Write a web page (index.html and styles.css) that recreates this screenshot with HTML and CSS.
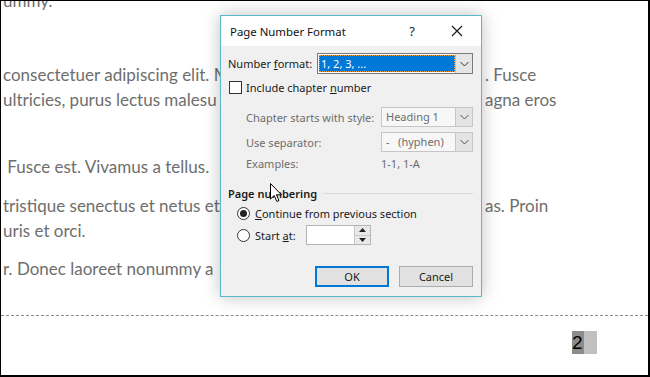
FILE: index.html
```html
<!DOCTYPE html>
<html>
<head>
<meta charset="utf-8">
<link rel="stylesheet" href="styles.css">
</head>
<body>
<div class="frame">
  <div class="doc">
    <div class="line top"><span class="left">ummy.</span></div>
    <div class="para p1">
      <div class="line"><span class="left">consectetuer adipiscing elit. M</span><span class="right">. Fusce</span></div>
      <div class="line"><span class="left">ultricies, purus lectus malesu</span><span class="right">agna eros</span></div>
      <div class="line"><span class="left"></span></div>
    </div>
    <div class="para p2">
      <div class="line"><span class="left">&nbsp;Fusce est. Vivamus a tellus.</span></div>
    </div>
    <div class="para p3">
      <div class="line"><span class="left">tristique senectus et netus et</span><span class="right">as. Proin</span></div>
      <div class="line"><span class="left">uris et orci.</span></div>
    </div>
    <div class="para p4">
      <div class="line"><span class="left">r. Donec laoreet nonummy a</span></div>
    </div>
  </div>
  <div class="footer">
    <div class="pagenum"><span class="pn-dark">2</span><span class="pn-light"></span></div>
  </div>

  <div class="dialog">
    <div class="titlebar">
      <span class="title">Page Number Format</span>
      <span class="help">?</span>
      <svg class="close" width="12" height="12" viewBox="0 0 12 12"><path d="M1 1L11 11M11 1L1 11" stroke="#1a1a1a" stroke-width="1.2" fill="none"/></svg>
    </div>
    <div class="body">
      <div class="row fmt">
        <span class="lbl">Number <u>f</u>ormat:</span>
        <div class="select main">
          <span class="sel-text"><span class="hl">1, 2, 3, ...</span></span>
          <span class="arrow"><svg width="9" height="6" viewBox="0 0 9 6"><path d="M0.5 1L4.5 5L8.5 1" stroke="#333" fill="none"/></svg></span>
        </div>
      </div>
      <div class="row check">
        <span class="box"></span>
        <span class="lbl">Include chapter <u>n</u>umber</span>
      </div>
      <div class="row sub first">
        <span class="lbl dis">Chapter starts with style:</span>
        <div class="select small">
          <span class="sel-text dis">Heading 1</span>
          <span class="arrow"><svg width="9" height="6" viewBox="0 0 9 6"><path d="M0.5 1L4.5 5L8.5 1" stroke="#555" fill="none"/></svg></span>
        </div>
      </div>
      <div class="row sub sep">
        <span class="lbl dis">Use separator:</span>
        <div class="select small">
          <span class="sel-text dis">-&nbsp;&nbsp;&nbsp;(hyphen)</span>
          <span class="arrow"><svg width="9" height="6" viewBox="0 0 9 6"><path d="M0.5 1L4.5 5L8.5 1" stroke="#555" fill="none"/></svg></span>
        </div>
      </div>
      <div class="row sub ex">
        <span class="lbl dis">Examples:</span>
        <span class="exval dis">1-1, 1-A</span>
      </div>
      <div class="group">
        <span class="lbl">Page numbering</span>
        <span class="rule"></span>
      </div>
      <div class="row radio r1">
        <span class="rad on"></span>
        <span class="lbl"><u>C</u>ontinue from previous section</span>
      </div>
      <div class="row radio r2">
        <span class="rad"></span>
        <span class="lbl start">Start <u>a</u>t:</span>
        <div class="spin">
          <span class="spin-in"></span>
          <span class="spin-btns">
            <span class="sb"><svg width="7" height="4" viewBox="0 0 7 4"><path d="M0 4L3.5 0L7 4Z" fill="#222"/></svg></span>
            <span class="sb"><svg width="7" height="4" viewBox="0 0 7 4"><path d="M0 0L3.5 4L7 0Z" fill="#222"/></svg></span>
          </span>
        </div>
      </div>
      <div class="buttons">
        <span class="btn ok">OK</span>
        <span class="btn">Cancel</span>
      </div>
    </div>
  </div>

  <svg class="cursor" width="13" height="20" viewBox="0 0 13 20"><path d="M0.5 0.5L0.5 16L4.2 12.5L6.8 18.5L9 17.5L6.5 11.8L11.5 11.8Z" fill="#fff" stroke="#000" stroke-width="1" stroke-linejoin="round"/></svg>
</div>
</body>
</html>
```
FILE: styles.css
```css
html, body {
  margin: 0;
  padding: 0;
}
body {
  width: 650px;
  height: 377px;
  overflow: hidden;
  background: #fff;
}
.frame {
  position: relative;
  width: 650px;
  height: 377px;
  box-sizing: border-box;
  border-top: 1px solid #000;
  border-left: 1px solid #000;
  border-right: 2px solid #000;
  border-bottom: 2px solid #000;
  overflow: hidden;
  background: #fff;
}
.doc {
  font-family: Lato, "Liberation Sans", sans-serif;
  font-size: 17px;
  color: #6e6e6e;
  margin-top: -13px;
  height: 327px;
}
.line {
  display: flex;
  height: 25px;
  line-height: 25px;
  white-space: nowrap;
}
.line .left {
  width: 482px;
  overflow: hidden;
  padding-left: 2px;
  flex: none;
}
.line .right {
  flex: none;
}
.p1 { margin-top: 49px; }
.p2 { margin-top: 17px; }
.p3 { margin-top: 14px; }
.p4 { margin-top: 13px; }

.footer {
  border-top: 1px dashed #8a8a8a;
  padding-top: 15px;
  display: flex;
  justify-content: flex-end;
  padding-right: 51px;
}
.pagenum {
  display: flex;
  height: 23px;
}
.pn-dark {
  background: #8c8c8c;
  width: 12px;
  font-family: "Liberation Sans", sans-serif;
  font-size: 19px;
  line-height: 23px;
  color: #000;
  overflow: hidden;
}
.pn-light {
  background: #c0c0c0;
  width: 13px;
}

/* dialog */
.dialog {
  position: absolute;
  left: 219px;
  top: 14px;
  width: 262px;
  height: 282px;
  box-sizing: border-box;
  border: 1px solid #5cb7c9;
  background: #f0f0f0;
  box-shadow: 0 0 16px rgba(0,0,0,0.25);
  font-family: "Noto Sans", "Liberation Sans", sans-serif;
  font-size: 11px;
  color: #1a1a1a;
}
.titlebar {
  height: 30px;
  background: #fff;
  display: flex;
  align-items: center;
  padding-left: 9px;
  padding-right: 18px;
}
.title {
  flex: 1;
  font-size: 11.4px;
  color: #111;
}
.help {
  font-size: 13px;
  margin-right: 36px;
  color: #222;
}
.close { display: block; }
.body {
  padding: 7px 8px 0 7px;
}
.row {
  display: flex;
  align-items: center;
}
.fmt {
  height: 21px;
  justify-content: space-between;
}
.select {
  display: flex;
  box-sizing: border-box;
  border: 1px solid #7a7a7a;
  background: #fff;
}
.select.main {
  width: 156px;
  height: 21px;
  padding: 1px 0 1px 1px;
}
.select.main .sel-text {
  flex: 1;
  display: flex;
}
.hl {
  flex: 1;
  background: #0078d7;
  color: #fff;
  line-height: 17px;
  padding-left: 2px;
  outline: 1px dotted #e0a050;
  outline-offset: -1px;
}
.select .arrow {
  width: 16px;
  display: flex;
  align-items: center;
  justify-content: center;
  background: #e5e5e5;
  border-left: 1px solid #c4c4c4;
}
.select.main .arrow {
  margin-top: -1px;
  margin-bottom: -1px;
}
.check {
  margin-top: 4px;
  height: 18px;
  padding-left: 1px;
}
.box {
  width: 13px;
  height: 13px;
  box-sizing: border-box;
  border: 1px solid #333;
  background: #fff;
  margin-right: 4px;
}
.sub {
  padding-left: 18px;
  justify-content: space-between;
}
.sub.first {
  margin-top: 11px;
}
.select.small {
  width: 92px;
  height: 20px;
  border-color: #c6c6c6;
  background: #f7f7f7;
}
.select.small .sel-text {
  flex: 1;
  line-height: 18px;
  padding-left: 4px;
}
.select.small .arrow {
  background: #e3e3e3;
  border-left: 1px solid #c6c6c6;
}
.sep { margin-top: 5px; }
.ex {
  margin-top: 2px;
  height: 18px;
}
.exval {
  width: 92px;
  padding-left: 1px;
}
.dis { color: #6d6d6d; }
.group {
  display: flex;
  align-items: center;
  margin-top: 12px;
  height: 18px;
}
.group .lbl { font-weight: 600; }
.rule {
  flex: 1;
  height: 1px;
  background: #dadada;
  margin-left: 6px;
}
.radio {
  padding-left: 9px;
  height: 20px;
}
.r1 { margin-top: 1px; }
.r2 { margin-top: 2px; }
.rad {
  width: 13px;
  height: 13px;
  box-sizing: border-box;
  border: 1px solid #333;
  border-radius: 50%;
  background: #fff;
  margin-right: 5px;
  display: flex;
  align-items: center;
  justify-content: center;
}
.rad.on::after {
  content: "";
  width: 7px;
  height: 7px;
  border-radius: 50%;
  background: #222;
}
.lbl.start {
  width: 51px;
}
.spin {
  width: 65px;
  height: 20px;
  box-sizing: border-box;
  border: 1px solid #b4b4b4;
  background: #fff;
  display: flex;
}
.spin-in { flex: 1; }
.spin-btns {
  width: 15px;
  display: flex;
  flex-direction: column;
  border-left: 1px solid #c8c8c8;
  background: #e8e8e8;
}
.sb {
  flex: 1;
  display: flex;
  align-items: center;
  justify-content: center;
}
.sb + .sb { border-top: 1px solid #c8c8c8; }
.buttons {
  display: flex;
  justify-content: flex-end;
  gap: 10px;
  margin-top: 21px;
}
.btn {
  width: 74px;
  height: 21px;
  box-sizing: border-box;
  border: 1px solid #adadad;
  background: #e1e1e1;
  display: flex;
  align-items: center;
  justify-content: center;
}
.btn.ok {
  border: 2px solid #0078d7;
}
.cursor {
  position: absolute;
  left: 269px;
  top: 182px;
}
```
